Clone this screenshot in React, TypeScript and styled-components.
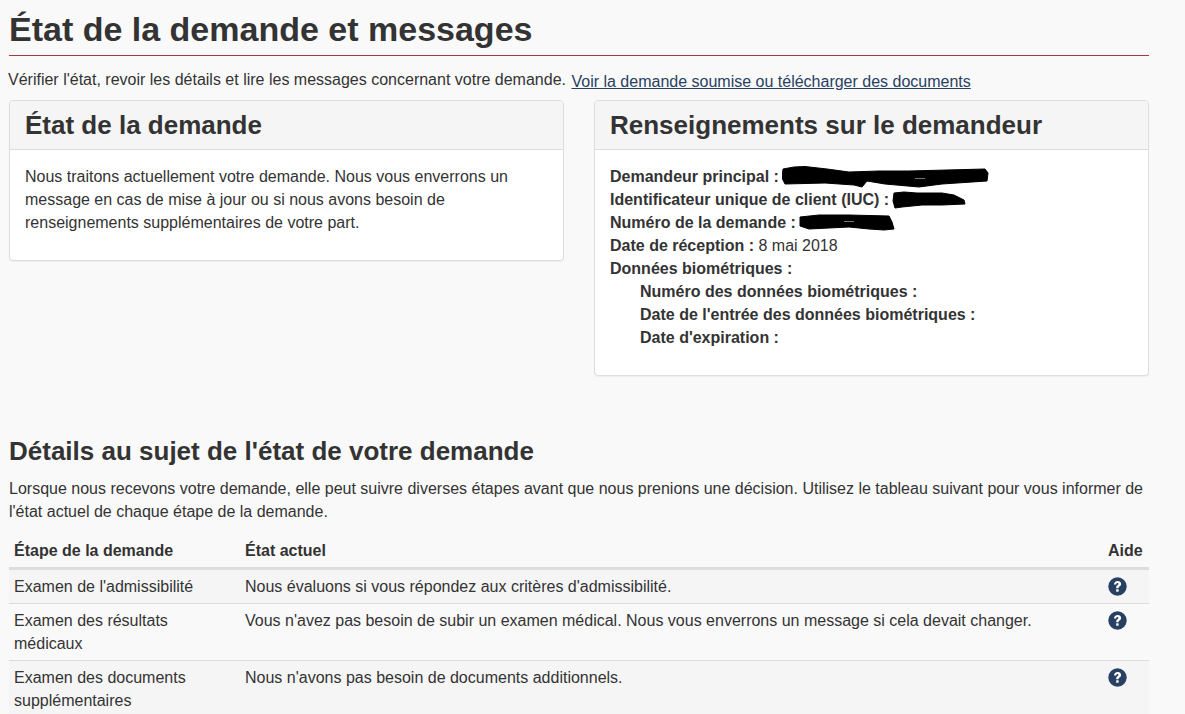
import styled, { createGlobalStyle } from 'styled-components';

const GlobalStyle = createGlobalStyle`
  html, body {
    margin: 0;
    padding: 0;
    height: 714px;
    overflow: hidden;
    background: #f9f9f9;
    color: #333;
    font-family: "Liberation Sans", Arial, sans-serif;
    font-size: 16px;
    line-height: 23px;
  }
`;

const Page = styled.main`
  width: 1140px;
  margin-left: 9px;
`;

const Heading = styled.h1`
  margin: 0;
  padding: 9px 0 6px;
  height: 40px;
  font-size: 34px;
  line-height: 40px;
  font-weight: bold;
  border-bottom: 1px solid #a23a40;
`;

const Intro = styled.p`
  margin: 12px 0 0 -1px;
  height: 32px;
  line-height: 23px;
`;

const DocumentsLink = styled.a`
  margin-left: 1px;
  vertical-align: -2px;
  color: #284162;
  text-decoration: underline;
`;

const Panels = styled.div`
  display: grid;
  grid-template-columns: 555px 555px;
  gap: 30px;
  align-items: start;
`;

const Panel = styled.section<{ $height: number }>`
  box-sizing: border-box;
  height: ${({ $height }) => $height}px;
  background: #fff;
  border: 1px solid #ddd;
  border-radius: 4px;
  box-shadow: 0 1px 1px rgba(0, 0, 0, 0.05);
`;

const PanelHeader = styled.div`
  box-sizing: border-box;
  height: 49px;
  padding: 0 15px;
  background: #f5f5f5;
  border-bottom: 1px solid #ddd;
  border-radius: 3px 3px 0 0;
`;

const PanelTitle = styled.h2`
  margin: 0;
  font-size: 26px;
  line-height: 48px;
  font-weight: bold;
`;

const PanelBody = styled.div`
  padding: 15px;
`;

const Detail = styled.div<{ $indent?: boolean }>`
  display: flex;
  align-items: center;
  height: 23px;
  padding-left: ${({ $indent }) => ($indent ? 30 : 0)}px;
  white-space: pre;
`;

const Label = styled.strong`
  font-weight: bold;
`;

const Scribble = styled.svg<{ $gap: number }>`
  display: block;
  flex: none;
  margin-left: ${({ $gap }) => $gap}px;
`;

const SectionTitle = styled.h2`
  margin: 59px 0 0;
  font-size: 26px;
  line-height: 33px;
  font-weight: bold;
`;

const SectionText = styled.p`
  margin: 9px 0 0;
  line-height: 23px;
`;

const StepsTable = styled.table`
  width: 100%;
  margin-top: 8px;
  border-collapse: collapse;
  table-layout: fixed;
`;

const HeadCell = styled.th<{ $width?: number }>`
  width: ${({ $width }) => ($width ? `${$width}px` : 'auto')};
  box-sizing: border-box;
  padding: 8px 5px 5px;
  text-align: left;
  font-weight: bold;
  border-bottom: 3px solid #ddd;
`;

const StepRow = styled.tr<{ $striped?: boolean }>`
  background: ${({ $striped }) => ($striped ? '#f5f5f5' : 'transparent')};
  border-bottom: 1px solid #ddd;
`;

const StepCell = styled.td`
  padding: 5px;
  vertical-align: top;
`;

const HelpSvg = styled.svg`
  display: block;
  margin-top: 2px;
`;

const rows = [
  {
    step: "Examen de l'admissibilité",
    state: "Nous évaluons si vous répondez aux critères d'admissibilité.",
  },
  {
    step: 'Examen des résultats médicaux',
    state:
      "Vous n'avez pas besoin de subir un examen médical. Nous vous enverrons un message si cela devait changer.",
  },
  {
    step: 'Examen des documents supplémentaires',
    state: "Nous n'avons pas besoin de documents additionnels.",
  },
];

function HelpIcon() {
  return (
    <HelpSvg width="19" height="19" viewBox="0 0 19 19">
      <circle cx="9.5" cy="9.5" r="9.2" fill="#284162" />
      <path
        d="M6 7.4c.1-2.1 1.6-3.4 3.6-3.4 2.1 0 3.5 1.2 3.5 2.9 0 1.2-.6 1.9-1.6 2.5-.7.5-1 .8-1 1.5v.3H8.2v-.5c0-1.2.4-1.8 1.3-2.4.6-.4.9-.8.9-1.2 0-.6-.4-1-1-1-.7 0-1 .5-1.1 1.3H6z"
        fill="#fff"
      />
      <rect x="8.2" y="12.3" width="2.4" height="2.4" fill="#fff" />
    </HelpSvg>
  );
}

export default function App() {
  return (
    <Page>
      <GlobalStyle />
      <Heading>État de la demande et messages</Heading>
      <Intro>
        Vérifier l'état, revoir les détails et lire les messages concernant votre demande.{' '}
        <DocumentsLink href="#">Voir la demande soumise ou télécharger des documents</DocumentsLink>
      </Intro>
      <Panels>
        <Panel $height={161}>
          <PanelHeader>
            <PanelTitle>État de la demande</PanelTitle>
          </PanelHeader>
          <PanelBody>
            Nous traitons actuellement votre demande. Nous vous enverrons un message en cas de
            mise à jour ou si nous avons besoin de renseignements supplémentaires de votre part.
          </PanelBody>
        </Panel>
        <Panel $height={276}>
          <PanelHeader>
            <PanelTitle>Renseignements sur le demandeur</PanelTitle>
          </PanelHeader>
          <PanelBody>
            <Detail>
              <Label>Demandeur principal :</Label>
              <Scribble $gap={3} width="208" height="22" viewBox="0 0 208 22">
                <path
                  d="M1 3 12 1 23 .5 45 3 67 6 97 5 127 5 165 4 203 3 206 7 205 15 160 18 137 21 103 18 85 15 80 21 72 19 43 17 3 18 0 12z"
                  fill="#000"
                  stroke="#000"
                  strokeLinejoin="round"
                />
                <rect x="133" y="12" width="10" height="1" fill="#777" />
              </Scribble>
            </Detail>
            <Detail>
              <Label>Identificateur unique de client (IUC) :</Label>
              <Scribble $gap={3} width="75" height="18" viewBox="0 0 75 18">
                <path
                  d="M2 2 12 1 25 2 50 2 62 4 72 9 73 13 50 14 30 14 10 16 3 17 1 10z"
                  fill="#000"
                  stroke="#000"
                  strokeLinejoin="round"
                />
              </Scribble>
            </Detail>
            <Detail>
              <Label>Numéro de la demande :</Label>
              <Scribble $gap={3} width="96" height="17" viewBox="0 0 96 17">
                <path
                  d="M1 3 20 1 50 1 90 2 93 8 95 15 85 16 70 15 50 13 30 14 10 15 1 12z"
                  fill="#000"
                  stroke="#000"
                  strokeLinejoin="round"
                />
                <rect x="45" y="7" width="10" height="1" fill="#777" />
              </Scribble>
            </Detail>
            <Detail>
              <Label>Date de réception :</Label> 8 mai 2018
            </Detail>
            <Detail>
              <Label>Données biométriques :</Label>
            </Detail>
            <Detail $indent>
              <Label>Numéro des données biométriques :</Label>
            </Detail>
            <Detail $indent>
              <Label>Date de l'entrée des données biométriques :</Label>
            </Detail>
            <Detail $indent>
              <Label>Date d'expiration :</Label>
            </Detail>
          </PanelBody>
        </Panel>
      </Panels>
      <SectionTitle>Détails au sujet de l'état de votre demande</SectionTitle>
      <SectionText>
        Lorsque nous recevons votre demande, elle peut suivre diverses étapes avant que nous
        prenions une décision. Utilisez le tableau suivant pour vous informer de l'état actuel de
        chaque étape de la demande.
      </SectionText>
      <StepsTable>
        <thead>
          <tr>
            <HeadCell $width={231}>Étape de la demande</HeadCell>
            <HeadCell>État actuel</HeadCell>
            <HeadCell $width={46}>Aide</HeadCell>
          </tr>
        </thead>
        <tbody>
          {rows.map((row, index) => (
            <StepRow key={row.step} $striped={index % 2 === 0}>
              <StepCell>{row.step}</StepCell>
              <StepCell>{row.state}</StepCell>
              <StepCell>
                <HelpIcon />
              </StepCell>
            </StepRow>
          ))}
        </tbody>
      </StepsTable>
    </Page>
  );
}
